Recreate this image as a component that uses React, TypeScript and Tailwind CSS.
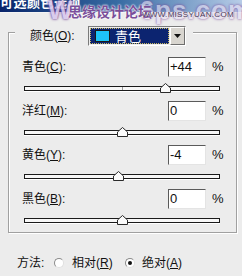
const rows = [
  { label: "青色", key: "C", text: "+44", value: 44 },
  { label: "洋红", key: "M", text: "0", value: 0 },
  { label: "黄色", key: "Y", text: "-4", value: -4 },
  { label: "黑色", key: "B", text: "0", value: 0 },
]

function Label({ name, k }: { name: string; k: string }) {
  return (
    <span>
      {name}(<u className="underline-offset-1">{k}</u>):
    </span>
  )
}

function Slider({ value }: { value: number }) {
  // track is 196px wide, -100..100 maps onto it
  const center = 98 + value * 0.98
  return (
    <div className="relative w-[196px] h-[5px] border border-[#1a1a1a] bg-[#f7f7f7] shadow-[0_1px_0_#fff]">
      <div className="absolute left-[97px] top-0 w-px h-[3px] bg-[#9a9a9a]" />
      <svg
        className="absolute top-[-4px]"
        style={{ left: center - 6 }}
        width="11"
        height="10"
        viewBox="0 0 11 10"
      >
        <path d="M0.5 9.5 V5 L5.5 0.5 L10.5 5 V9.5 Z" fill="#fafafa" stroke="#2a2a2a" />
      </svg>
    </div>
  )
}

function Radio({ checked }: { checked?: boolean }) {
  return (
    <span className="w-[10px] h-[10px] rounded-full bg-white border border-t-[#8a8a8a] border-l-[#8a8a8a] border-r-[#e0e0e0] border-b-[#e0e0e0] flex items-center justify-center">
      {checked && <span className="w-[4px] h-[4px] rounded-full bg-[#111]" />}
    </span>
  )
}

export default function App() {
  return (
    <div className="relative w-[242px] h-[276px] overflow-hidden bg-[#ececec] text-[12px] text-[#111] font-['Liberation_Sans','Noto_Sans_CJK_SC',sans-serif]">
      {/* title bar, cut at the top */}
      <div className="h-[13px] overflow-hidden bg-gradient-to-r from-[#0a246a] via-[#3a6ea5] to-[#b8cde8] border-b border-[#f4f4f4]">
        <div className="-mt-[6px] text-[13px] font-bold leading-[18px] text-white tracking-[0.5px]">
          可选颜色选项
        </div>
      </div>

      {/* watermark */}
      <div className="absolute left-[48px] top-[-5px] text-[26px] font-bold leading-[30px] text-[#d9c8ec] [text-shadow:0_0_2px_#7a4a9a,0_0_3px_#7a4a9a] tracking-[1px] opacity-90">
        W<span className="ml-[66px] text-[#e6dcf2] opacity-70">6ps.com</span>
      </div>
      <div className="absolute left-[68px] top-[4px] text-[14px] font-bold leading-[16px] text-[#7a4f9a] [text-shadow:0_0_2px_#fff,0_0_2px_#fff]">
        思缘设计论坛
      </div>
      <div className="absolute left-[142px] top-[10px] text-[8px] leading-[10px] text-[#4a3a5a] tracking-[0.3px] [text-shadow:0_0_2px_#fff]">
        WWW.MISSYUAN.COM
      </div>

      {/* group box */}
      <div className="relative ml-[8px] mt-[19px] w-[229px] h-[201px] border border-[#a0a0a0] shadow-[inset_1px_1px_0_#fff,1px_1px_0_#fff] pt-[24px] pl-[13px]">
        <div className="absolute left-[6px] top-[-7px] w-[178px] h-[20px] bg-[#ececec] flex items-center pl-[15px]">
          <span className="w-[58px]">
            <Label name="颜色" k="O" />
          </span>
          <div className="w-[98px] h-[20px] flex border border-t-[#7a7a7a] border-l-[#7a7a7a] border-b-white border-r-white">
            <div className="flex-1 m-[1px] bg-[#0c2470] border border-dotted border-[#c8b860] flex items-center pl-[4px] gap-[5px]">
              <span className="w-[15px] h-[12px] bg-[#1ec4f6] border border-[#1a1a1a]" />
              <span className="text-white text-[13px] leading-none">青色</span>
            </div>
            <div className="w-[15px] bg-[#d8d5cf] border border-t-white border-l-white border-b-[#6e6e6e] border-r-[#6e6e6e] flex items-center justify-center">
              <svg width="7" height="4" viewBox="0 0 7 4">
                <path d="M0 0 H7 L3.5 4 Z" fill="#111" />
              </svg>
            </div>
          </div>
        </div>

        {rows.map((r, i) => (
          <div key={r.key} className={i === 3 ? "h-[43px] flex flex-col" : "h-[44px] flex flex-col"}>
            <div className="h-[20px] flex items-center">
              <span className="w-[146px]">
                <Label name={r.label} k={r.key} />
              </span>
              <div className="w-[38px] h-[20px] bg-white border border-t-[#5a5a5a] border-l-[#5a5a5a] border-b-[#e4e4e4] border-r-[#e4e4e4] flex items-center pl-[1px] text-[13px]">
                {r.text}
              </div>
              <span className="ml-[6px] text-[13px]">%</span>
            </div>
            <div className="h-[22px] flex items-center pl-[2px]">
              <Slider value={r.value} />
            </div>
          </div>
        ))}
      </div>

      {/* method */}
      <div className="mt-[22px] pl-[17px] flex items-center h-[16px]">
        <span className="w-[37px]">方法:</span>
        <Radio />
        <span className="ml-[8px] w-[53px]">
          相对(<u>R</u>)
        </span>
        <Radio checked />
        <span className="ml-[7px]">
          绝对(<u>A</u>)
        </span>
      </div>
    </div>
  )
}
